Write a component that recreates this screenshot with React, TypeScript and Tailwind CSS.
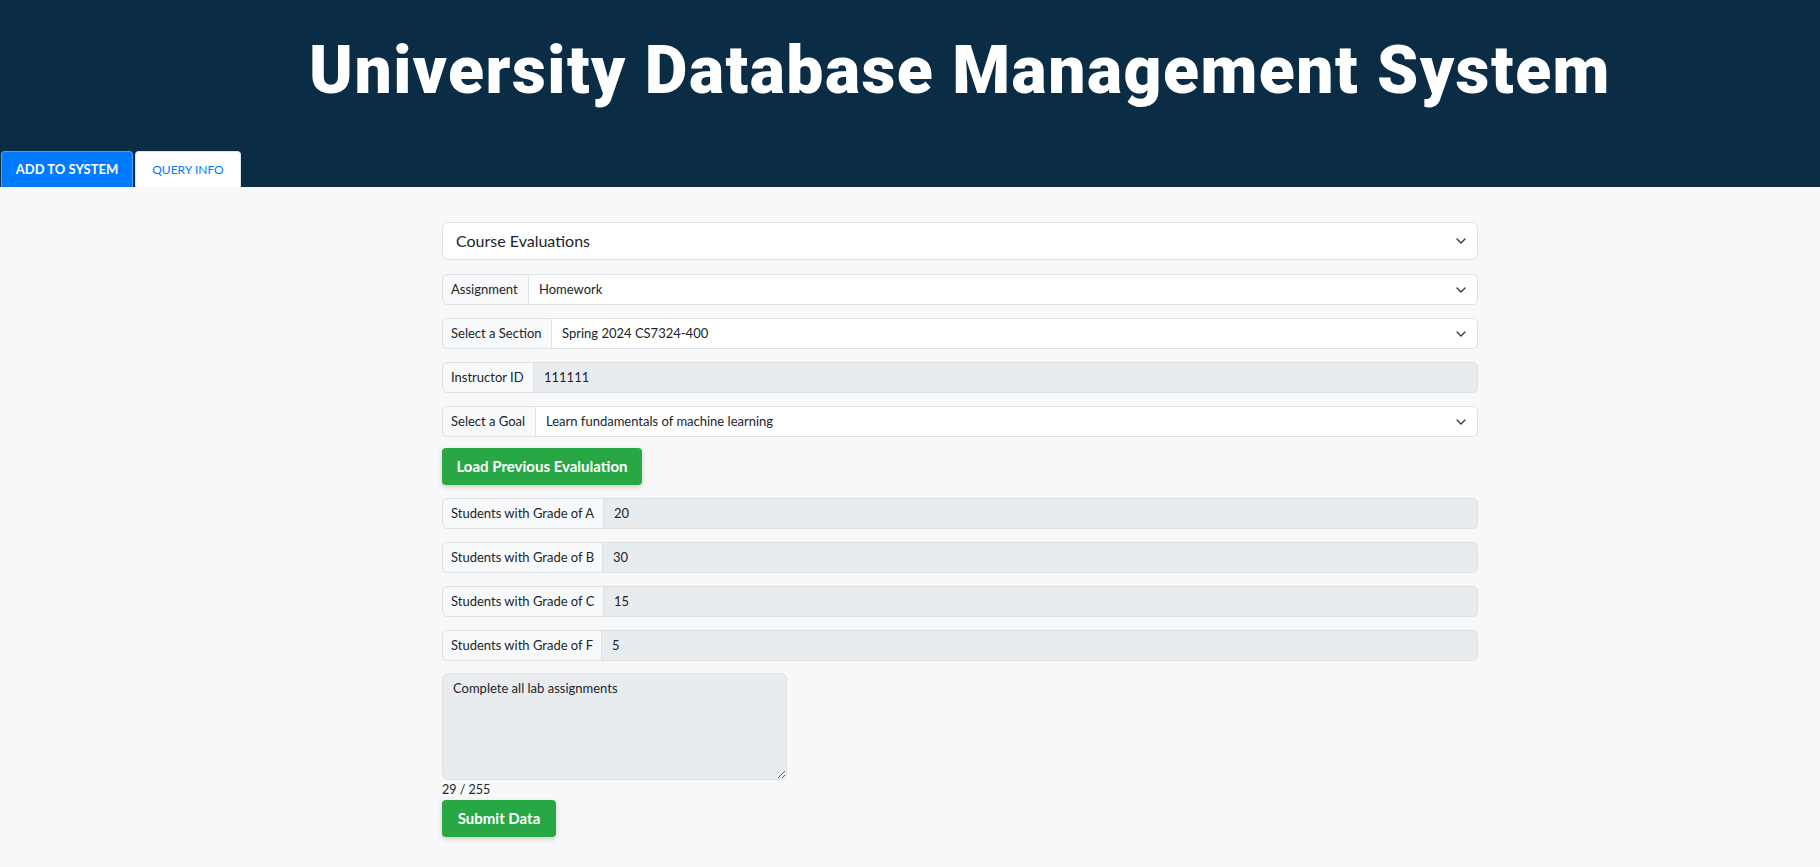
import { ChangeEvent, useState } from "react"

const Chevron = () => (
    <svg width="10" height="6" viewBox="0 0 10 6" className="shrink-0">
        <polyline points="1,1 5,5 9,1" fill="none" stroke="#343a40" strokeWidth="1.4" strokeLinecap="round" strokeLinejoin="round" />
    </svg>
)

type RowProps = {
    label: string
    value: string
    labelWidth: string
    select?: boolean
}

const Row = ({ label, value, labelWidth, select }: RowProps) => {
    return (
        <div className="flex h-[31px] text-[13px]">
            <div className={`${labelWidth} shrink-0 flex items-center px-[8px] whitespace-nowrap bg-[#f8f9fa] border border-[#dee2e6] rounded-l-[5px]`}>
                {label}
            </div>
            <div className={`
            flex-1 flex items-center justify-between pl-[10px] pr-[11px] -ml-px
            border border-[#dee2e6] rounded-r-[5px]
            ${select ? "bg-white" : "bg-[#e9ecef]"}`}>
                <span>{value}</span>
                {select && <Chevron />}
            </div>
        </div>
    )
}

const App = () => {
    const [comment, setComment] = useState("Complete all lab assignments ")

    return (
        <div className="min-h-screen bg-[#f8f8f8] text-[#212529] font-['Lato',sans-serif]">
            <header className="h-[187px] bg-[#0a2c45] flex flex-col">
                <div className="flex-1 flex justify-center pl-[100px] pt-[38px]">
                    <h1 className="text-white text-[66px] leading-none font-black tracking-[1.5px] font-['Roboto',sans-serif]">
                        University Database Management System
                    </h1>
                </div>
                <nav className="flex items-end gap-[2px] h-[36px] pl-px">
                    <button className="
                    h-[36px] w-[132px] bg-[#007bff] text-white text-[13px] font-bold uppercase
                    rounded-t-[4px] border border-b-0 border-[#4d9dff]">
                        Add to System
                    </button>
                    <button className="
                    h-[36px] w-[106px] bg-white text-[#007bff] text-[12px] uppercase
                    rounded-t-[4px] border border-b-0 border-[#dee2e6]">
                        Query Info
                    </button>
                </nav>
            </header>

            <main className="flex justify-center pl-[100px] pt-[35px] pb-[30px]">
                <div className="w-[1036px] flex flex-col">
                    <div className="
                    h-[38px] flex items-center justify-between pl-[13px] pr-[11px]
                    bg-white border border-[#dee2e6] rounded-[6px] text-[16px]">
                        <span>Course Evaluations</span>
                        <Chevron />
                    </div>

                    <div className="flex flex-col gap-[13px] mt-[14px]">
                        <Row label="Assignment" value="Homework" labelWidth="w-[87px]" select />
                        <Row label="Select a Section" value="Spring 2024 CS7324-400" labelWidth="w-[110px]" select />
                        <Row label="Instructor ID" value="111111" labelWidth="w-[92px]" />
                        <Row label="Select a Goal" value="Learn fundamentals of machine learning" labelWidth="w-[94px]" select />
                    </div>

                    <button className="
                    mt-[11px] h-[37px] w-[200px] bg-[#28a745] text-white text-[15px] font-bold
                    rounded-[4px] shadow-[0_2px_5px_rgba(0,0,0,0.18)]">
                        Load Previous Evalulation
                    </button>

                    <div className="flex flex-col gap-[13px] mt-[13px]">
                        <Row label="Students with Grade of A" value="20" labelWidth="w-[162px]" />
                        <Row label="Students with Grade of B" value="30" labelWidth="w-[161px]" />
                        <Row label="Students with Grade of C" value="15" labelWidth="w-[162px]" />
                        <Row label="Students with Grade of F" value="5" labelWidth="w-[160px]" />
                    </div>

                    <textarea
                        value={comment}
                        onChange={(e: ChangeEvent<HTMLTextAreaElement>) => setComment(e.target.value)}
                        maxLength={255}
                        className="
                        mt-[12px] w-[345px] h-[107px] px-[10px] py-[4px]
                        bg-[#e9ecef] border border-[#dee2e6] rounded-[6px]
                        text-[13px] leading-[20px] text-[#212529] outline-none font-['Lato',sans-serif]"
                    />
                    <p className="text-[12.5px] leading-[20px]">{comment.length} / 255</p>

                    <button className="
                    h-[37px] w-[114px] bg-[#28a745] text-white text-[15px] font-bold
                    rounded-[4px] shadow-[0_2px_5px_rgba(0,0,0,0.18)]">
                        Submit Data
                    </button>
                </div>
            </main>
        </div>
    )
}

export default App
